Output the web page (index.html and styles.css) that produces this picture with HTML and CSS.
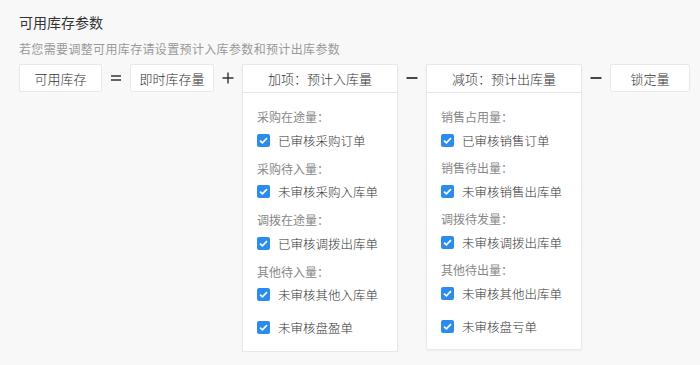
FILE: index.html
```html
<!DOCTYPE html>
<html lang="zh-CN">
<head>
    <meta charset="UTF-8">
    <meta name="viewport" content="width=device-width, initial-scale=1.0">
    <title>可用库存参数</title>
    <link rel="stylesheet" href="styles.css">
</head>
<body>
    <div class="page">
        <div class="title">可用库存参数</div>
        <div class="subtitle">若您需要调整可用库存请设置预计入库参数和预计出库参数</div>

        <div class="formula">
            <div class="box box-first">可用库存</div>

            <div class="op">
                <svg width="12" height="12" viewBox="0 0 12 12"><path d="M1 4h10M1 8h10" stroke="#333" stroke-width="1.6"/></svg>
            </div>

            <div class="box">即时库存量</div>

            <div class="op">
                <svg width="12" height="12" viewBox="0 0 12 12"><path d="M0.5 6h11M6 0.5v11" stroke="#333" stroke-width="1.4"/></svg>
            </div>

            <div class="panel">
                <div class="panel-head">加项：预计入库量</div>
                <div class="panel-body">
                    <div class="group">
                        <div class="group-label">采购在途量：</div>
                        <div class="check"><span class="cb"></span>已审核采购订单</div>
                    </div>
                    <div class="group">
                        <div class="group-label">采购待入量：</div>
                        <div class="check"><span class="cb"></span>未审核采购入库单</div>
                    </div>
                    <div class="group">
                        <div class="group-label">调拨在途量：</div>
                        <div class="check"><span class="cb"></span>已审核调拨出库单</div>
                    </div>
                    <div class="group">
                        <div class="group-label">其他待入量：</div>
                        <div class="check"><span class="cb"></span>未审核其他入库单</div>
                    </div>
                    <div class="check check-last"><span class="cb"></span>未审核盘盈单</div>
                </div>
            </div>

            <div class="op">
                <svg width="12" height="12" viewBox="0 0 12 12"><path d="M0.5 6h11" stroke="#333" stroke-width="1.8"/></svg>
            </div>

            <div class="panel panel-minus">
                <div class="panel-head">减项：预计出库量</div>
                <div class="panel-body">
                    <div class="group">
                        <div class="group-label">销售占用量：</div>
                        <div class="check"><span class="cb"></span>已审核销售订单</div>
                    </div>
                    <div class="group">
                        <div class="group-label">销售待出量：</div>
                        <div class="check"><span class="cb"></span>未审核销售出库单</div>
                    </div>
                    <div class="group">
                        <div class="group-label">调拨待发量：</div>
                        <div class="check"><span class="cb"></span>未审核调拨出库单</div>
                    </div>
                    <div class="group">
                        <div class="group-label">其他待出量：</div>
                        <div class="check"><span class="cb"></span>未审核其他出库单</div>
                    </div>
                    <div class="check check-last"><span class="cb"></span>未审核盘亏单</div>
                </div>
            </div>

            <div class="op">
                <svg width="12" height="12" viewBox="0 0 12 12"><path d="M0.5 6h11" stroke="#333" stroke-width="1.8"/></svg>
            </div>

            <div class="box box-lock">锁定量</div>
        </div>
    </div>
</body>
</html>
```

FILE: styles.css
```css
* {
    box-sizing: border-box;
}

body {
    margin: 0;
    background: #f8f8f8;
    font-family: "Noto Sans CJK SC", "Noto Sans", sans-serif;
    color: #333;
}

.page {
    padding: 12px 0 0 19px;
}

.title {
    font-size: 14px;
    line-height: 20px;
    color: #333;
}

.subtitle {
    margin-top: 9px;
    font-size: 12px;
    line-height: 16px;
    letter-spacing: 0.35px;
    color: #999;
}

.formula {
    display: flex;
    align-items: flex-start;
    margin-top: 7px;
}

.formula > div {
    flex-shrink: 0;
}

.box {
    width: 84px;
    height: 28px;
    display: flex;
    align-items: center;
    justify-content: center;
    background: #fff;
    border: 1px solid #e8e8e8;
    border-radius: 2px;
    font-size: 13px;
    font-weight: 300;
}

.box-first {
    width: 83px;
}

.box-lock {
    width: 80px;
}

.op {
    width: 28px;
    height: 28px;
    display: flex;
    align-items: center;
    justify-content: center;
}

.panel {
    width: 156px;
    background: #fff;
    border: 1px solid #e8e8e8;
    border-radius: 2px;
    box-shadow: 0 1px 2px rgba(0, 0, 0, 0.05);
}

.panel-head {
    height: 28px;
    display: flex;
    align-items: center;
    justify-content: center;
    border-bottom: 1px solid #e8e8e8;
    font-size: 13px;
    font-weight: 300;
}

.panel-body {
    padding: 15px 14px 14px 14px;
}

.group + .group {
    margin-top: 10.5px;
}

.panel-minus .group + .group {
    margin-top: 10px;
}

.group-label {
    height: 18px;
    line-height: 18px;
    font-size: 12px;
    color: #888;
}

.check {
    display: flex;
    align-items: center;
    height: 18px;
    margin-top: 5px;
    font-size: 12.5px;
    font-weight: 300;
    color: #333;
}

.check-last {
    margin-top: 15px;
}

.cb {
    width: 13px;
    height: 13px;
    margin-right: 8px;
    border-radius: 2px;
    background: #2b8cee url("data:image/svg+xml;utf8,<svg xmlns='http://www.w3.org/2000/svg' width='13' height='13' viewBox='0 0 13 13'><path d='M3 6.6l2.4 2.3 4.6-4.8' fill='none' stroke='white' stroke-width='1.6'/></svg>") no-repeat center;
    flex-shrink: 0;
}
```
